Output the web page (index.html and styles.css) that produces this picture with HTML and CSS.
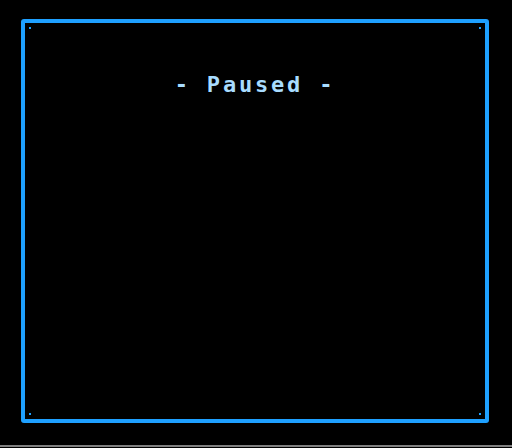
FILE: index.html
```html
<!DOCTYPE html>
<html>
<head>
<meta charset="utf-8">
<link rel="stylesheet" href="styles.css">
</head>
<body>
<div class="screen">
  <span class="dot dot-tl"></span>
  <span class="dot dot-tr"></span>
  <span class="dot dot-bl"></span>
  <span class="dot dot-br"></span>
  <div class="title">- Paused -</div>
</div>
<div class="floor"></div>
</body>
</html>
```
FILE: styles.css
```css
html, body {
  margin: 0;
  padding: 0;
  background: #000;
  width: 512px;
  height: 448px;
  overflow: hidden;
}
.screen {
  position: relative;
  box-sizing: border-box;
  margin: 19px 0 0 21px;
  width: 468px;
  height: 404px;
  border: 4px solid #1ea0ff;
  border-radius: 3px;
  padding-top: 51px;
}
.dot {
  position: absolute;
  width: 2px;
  height: 2px;
  background: #1ea0ff;
}
.dot-tl { top: 4px; left: 4px; }
.dot-tr { top: 4px; right: 4px; }
.dot-bl { bottom: 4px; left: 4px; }
.dot-br { bottom: 4px; right: 4px; }
.title {
  font-family: "DejaVu Sans Mono", monospace;
  font-weight: bold;
  font-size: 22px;
  line-height: 22px;
  letter-spacing: 2.8px;
  color: #a8dcff;
  text-align: center;
  white-space: pre;
}
.floor {
  margin-top: 22px;
  height: 2px;
  background: #808080;
}
```
